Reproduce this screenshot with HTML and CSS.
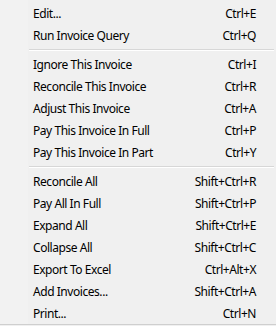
FILE: index.html
```html
<!DOCTYPE html>
<html lang="en">
<head>
    <meta charset="UTF-8">
    <title>Invoice Menu</title>
    <link rel="stylesheet" href="styles.css">
</head>
<body>
    <div class="menu">
        <div class="item"><span class="label">Edit...</span><span class="key">Ctrl+E</span></div>
        <div class="item"><span class="label">Run Invoice Query</span><span class="key">Ctrl+Q</span></div>
        <div class="sep"></div>
        <div class="item"><span class="label">Ignore This Invoice</span><span class="key">Ctrl+I</span></div>
        <div class="item"><span class="label">Reconcile This Invoice</span><span class="key">Ctrl+R</span></div>
        <div class="item"><span class="label">Adjust This Invoice</span><span class="key">Ctrl+A</span></div>
        <div class="item"><span class="label">Pay This Invoice In Full</span><span class="key">Ctrl+P</span></div>
        <div class="item"><span class="label">Pay This Invoice In Part</span><span class="key">Ctrl+Y</span></div>
        <div class="sep"></div>
        <div class="item"><span class="label">Reconcile All</span><span class="key">Shift+Ctrl+R</span></div>
        <div class="item"><span class="label">Pay All In Full</span><span class="key">Shift+Ctrl+P</span></div>
        <div class="item"><span class="label">Expand All</span><span class="key">Shift+Ctrl+E</span></div>
        <div class="item"><span class="label">Collapse All</span><span class="key">Shift+Ctrl+C</span></div>
        <div class="item"><span class="label">Export To Excel</span><span class="key">Ctrl+Alt+X</span></div>
        <div class="item"><span class="label">Add Invoices...</span><span class="key">Shift+Ctrl+A</span></div>
        <div class="item"><span class="label">Print...</span><span class="key">Ctrl+N</span></div>
    </div>
</body>
</html>
```

FILE: styles.css
```css
body {
    margin: 0;
    background-color: #f0f0f0;
    font-family: 'Noto Sans', sans-serif;
    font-size: 12px;
    letter-spacing: -0.45px;
    color: #000;
}

.menu {
    height: 322px;
    padding-top: 2px;
    border-bottom: 1px solid #cfcfcf;
    background: linear-gradient(to right, #f2f2f2 28px, #f0f0f0 28px);
    overflow: hidden;
}

.item {
    display: flex;
    justify-content: space-between;
    align-items: center;
    height: 22px;
    padding: 0 20px 0 33px;
}

.sep {
    height: 1px;
    margin: 3px 2px 2px 29px;
    border-bottom: 1px solid #fff;
    background-color: #d7d7d7;
}
```
